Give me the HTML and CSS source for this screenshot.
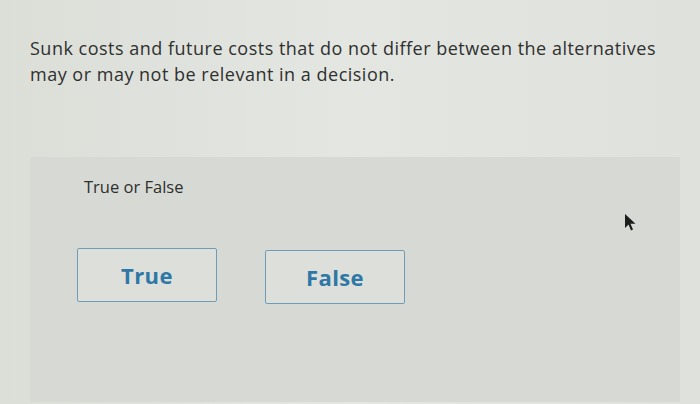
FILE: index.html
```html
<!DOCTYPE html>
<html>
<head>
<meta charset="utf-8">
<link rel="stylesheet" href="styles.css">
</head>
<body>
<div class="page">
  <p class="question">Sunk costs and future costs that do not differ between the alternatives may or may not be relevant in a decision.</p>
  <div class="panel">
    <div class="label">True or False</div>
    <div class="choices">
      <button class="choice">True</button>
      <button class="choice choice-false">False</button>
    </div>
  </div>
</div>
<svg class="cursor" width="14" height="20" viewBox="0 0 14 20"><path d="M1 1 L1 15 L4.5 11.5 L7 17.5 L9 16.5 L6.5 10.8 L11.5 10.8 Z" fill="#1c1d1c"/></svg>
</body>
</html>
```
FILE: styles.css
```css
html, body {
  margin: 0;
  padding: 0;
}
body {
  width: 700px;
  height: 404px;
  overflow: hidden;
  background: linear-gradient(90deg, #dcdfd8 0%, #e3e6e1 50%, #dfe1dc 100%);
  font-family: "Open Sans", "Lato", sans-serif;
  position: relative;
}
.page {
  padding: 35px 0 0 30px;
  height: 367px;
  display: flex;
  flex-direction: column;
}
.question {
  margin: 0;
  font-size: 18px;
  line-height: 26px;
  color: #2f302f;
  width: 640px;
  letter-spacing: 0.5px;
}
.panel {
  margin-top: 70px;
  width: 650px;
  flex: 1;
  background: #d7dad4;
  padding: 18px 0 0 47px;
  box-sizing: border-box;
}
.label {
  font-size: 16.5px;
  color: #2e2f2e;
  margin-left: 7px;
}
.choices {
  display: flex;
  gap: 48px;
  margin-top: 50px;
}
.choice {
  width: 140px;
  height: 54px;
  border: 1.5px solid #6f9db9;
  border-radius: 2px;
  background: #dde0da;
  color: #2e77a6;
  font-family: "Open Sans", "Lato", sans-serif;
  font-weight: 700;
  font-size: 22px;
  letter-spacing: 0.4px;
  padding: 0;
}
.choice-false {
  margin-top: 2px;
}
.cursor {
  position: absolute;
  left: 624px;
  top: 213px;
}
```
